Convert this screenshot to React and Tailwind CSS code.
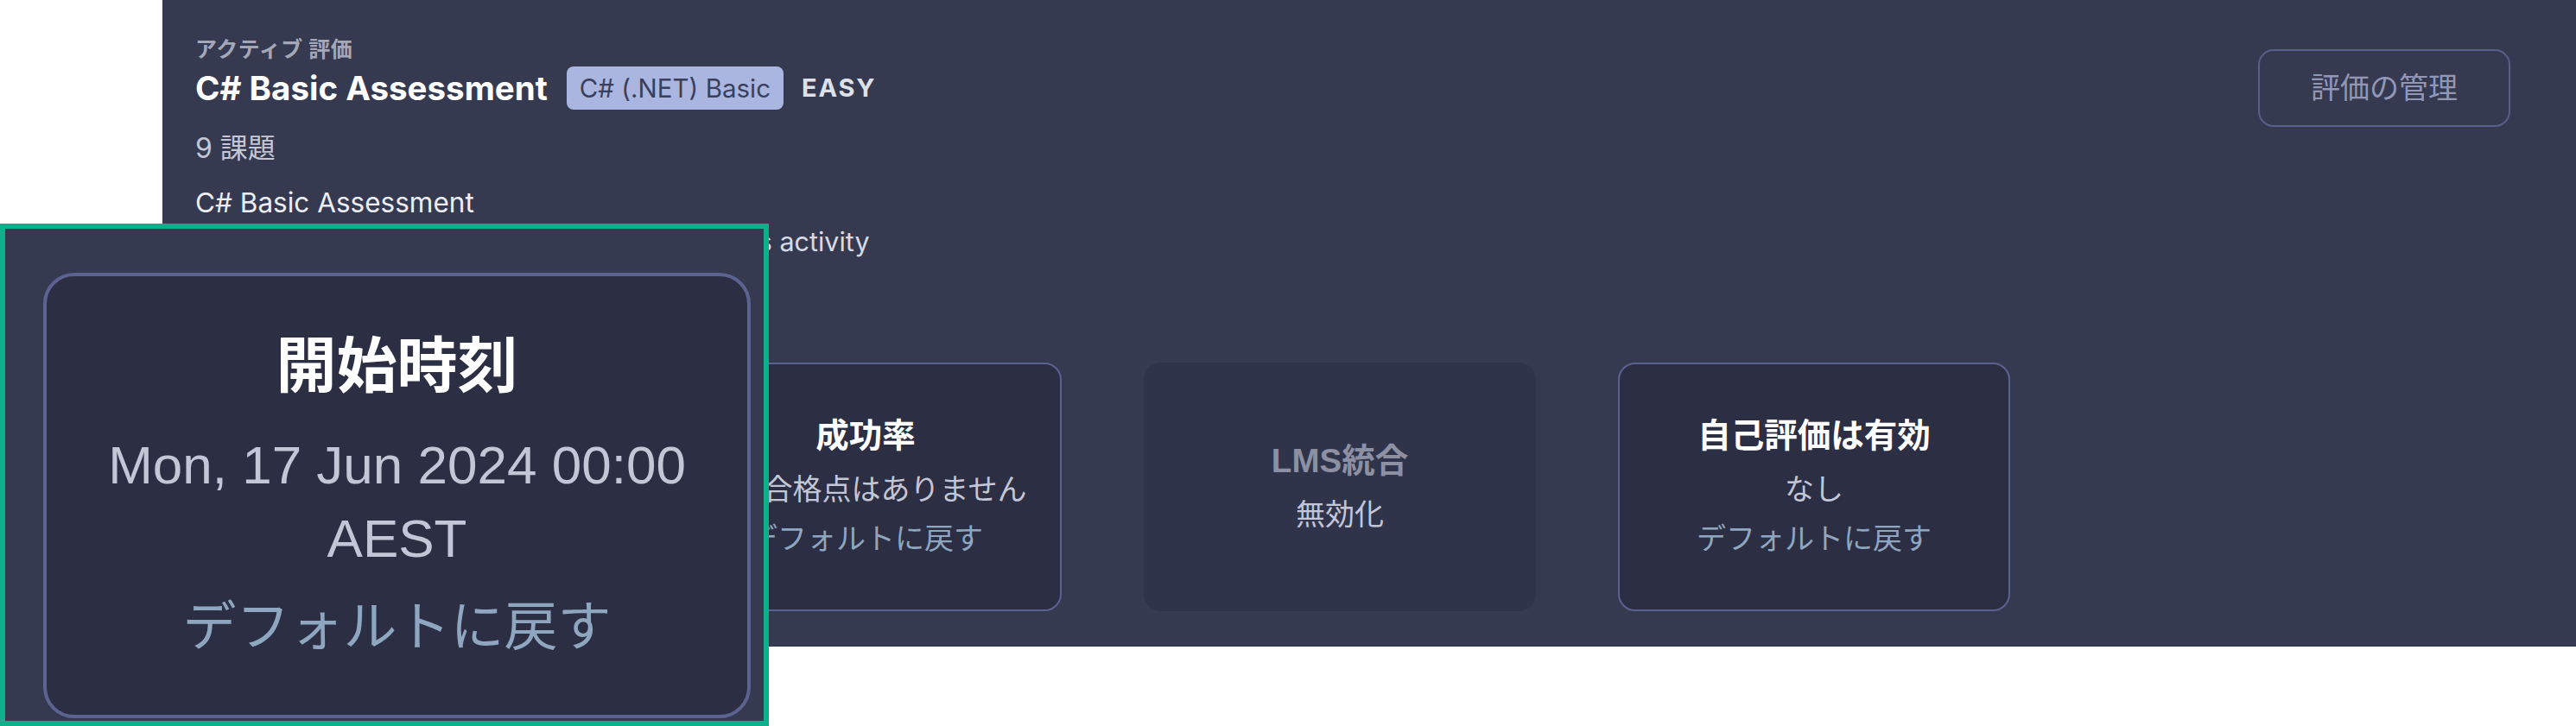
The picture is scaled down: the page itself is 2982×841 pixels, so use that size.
import React from "react";

const cjk = { fontFamily: '"Liberation Sans", "Noto Sans CJK JP", sans-serif' };
const head = { fontFamily: 'Inter, "Noto Sans CJK JP", sans-serif' };

function Card({ title, lines = [], reset, muted, bordered = true }) {
  return (
    <div
      style={cjk}
      className={
        "w-[454px] h-[288px] shrink-0 rounded-[20px] flex flex-col items-center justify-center text-center px-4 gap-[10px] " +
        (bordered ? "bg-[#2c2e43] border-2 border-[#5b6190]" : "bg-[#30344a]")
      }
    >
      <div
        className={
          "text-[38.5px] leading-[50px] font-bold mb-[4px] " +
          (muted ? "text-[#8d90a3]" : "text-white")
        }
      >
        {title}
      </div>
      {lines.map((l, i) => (
        <div key={i} className="text-[34px] leading-[47px] text-[#c3c6d6]">
          {l}
        </div>
      ))}
      {reset && (
        <div className="text-[34px] leading-[47px] text-[#8ea6bf]">デフォルトに戻す</div>
      )}
    </div>
  );
}

export default function App() {
  return (
    <div className="relative w-[2982px] h-[841px] bg-white overflow-hidden">
      <div className="ml-[188px] bg-[#363a51] pl-[38px] pr-[76px] pt-[42px] pb-[41px]">
        <div className="flex justify-between items-start">
          <div style={head}>
            <div className="text-[25px] leading-[30px] font-bold tracking-[0.02em] text-[#a4a7b8]">アクティブ 評価</div>
            <div className="mt-[5px] flex items-center h-[50px]">
              <span className="text-[38.5px] font-bold text-white leading-[50px]">C# Basic Assessment</span>
              <span className="ml-[22px] h-[50px] px-[15px] rounded-[8px] bg-[#aab6e0] text-[#3b3f5c] text-[29.5px] flex items-center">
                C# (.NET) Basic
              </span>
              <span className="ml-[21px] text-[29px] font-bold tracking-[0.06em] text-[#dfe1ea]">EASY</span>
            </div>
            <div className="mt-[23px] text-[32px] leading-[44px] text-[#c5c7d6]">9 課題</div>
            <div className="mt-[18px] text-[31.5px] leading-[45px] text-[#eceef4]">C# Basic Assessment</div>
            <div className="text-[30.5px] leading-[45px] text-[#d8dae6]">
              A short C# assessment to complete within this activity
            </div>
          </div>
          <button
            style={cjk}
            className="mt-[15px] w-[292px] h-[90px] rounded-[18px] border-2 border-[#585e8a] text-[34px] text-[#9397b4] flex items-center justify-center"
          >
            評価の管理
          </button>
        </div>
        <div className="mt-[118px] flex gap-[95px]">
          <Card title="開始時刻" lines={["Mon, 17 Jun 2024 00:00 AEST"]} reset />
          <Card title="成功率" lines={["最低合格点はありません"]} reset />
          <Card title="LMS統合" lines={["無効化"]} muted bordered={false} />
          <Card title="自己評価は有効" lines={["なし"]} reset />
        </div>
      </div>

      <div className="absolute left-0 top-[259px] w-[890px] h-[582px] border-[6px] border-[#0eb08c] bg-[#363a51] overflow-hidden pl-[44px] pt-[51px]">
        <div
          style={cjk}
          className="w-[819px] h-[516px] rounded-[36px] border-[4px] border-[#5d6391] bg-[#2c2e43] flex flex-col items-center justify-center text-center px-[30px] gap-[18px]"
        >
          <div className="text-[70px] leading-[90px] font-bold text-white mb-[8px]">開始時刻</div>
          <div className="text-[62px] leading-[85px] text-[#c3c6d6]">Mon, 17 Jun 2024 00:00 AEST</div>
          <div className="text-[62px] leading-[85px] text-[#8ea6bf]">デフォルトに戻す</div>
        </div>
      </div>
    </div>
  );
}
